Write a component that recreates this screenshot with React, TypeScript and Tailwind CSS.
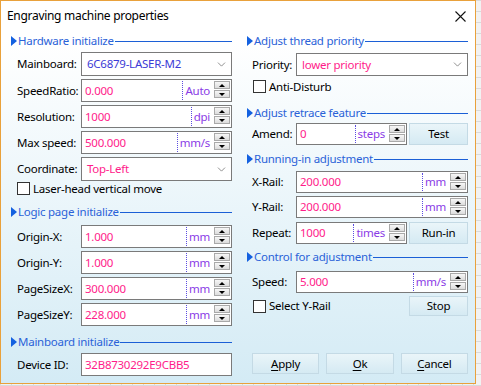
import { ChevronDown } from 'lucide-react'
import type { ReactNode } from 'react'

const PINK = 'text-[#ff1c8a]'

function Header({ title, className = '' }: { title: string; className?: string }) {
  return (
    <div className={`flex items-center h-[16px] ${className}`}>
      <svg width="6" height="10" viewBox="0 0 6 10" className="ml-px mr-[1px] shrink-0">
        <path d="M0 0 L6 5 L0 10 Z" fill="#1461e0" />
      </svg>
      <span className="text-[#2a62d8] leading-none whitespace-nowrap">{title}</span>
      <div className="flex-1 h-px bg-[#1b5fd6] ml-px" />
    </div>
  )
}

function SpinBtn({ up }: { up?: boolean }) {
  return (
    <div className="w-[16px] h-[8px] border border-[#a9a9a9] bg-linear-to-b from-[#f7f7f7] to-[#dcdcdc] flex items-center justify-center">
      <svg width="6" height="3" viewBox="0 0 6 3">
        {up ? <path d="M0 3 L3 0 L6 3 Z" fill="#000" /> : <path d="M0 0 L6 0 L3 3 Z" fill="#000" />}
      </svg>
    </div>
  )
}

function Spin() {
  return (
    <div className="flex flex-col gap-px shrink-0 self-start mt-[1px] mr-[1px]">
      <SpinBtn up />
      <SpinBtn />
    </div>
  )
}

function NumField({ value, unit, className = '' }: { value: string; unit: string; className?: string }) {
  return (
    <div className={`flex items-center border border-[#7a7a7a] bg-white ${className}`}>
      <span className={`flex-1 pl-[3px] ${PINK}`}>{value}</span>
      <div className="self-stretch my-[1px] border-l border-dotted border-[#5b4de0]" />
      <span className="pl-[2px] pr-[4px] text-[#8a3be6]">{unit}</span>
      <Spin />
    </div>
  )
}

function Select({ value, color, className = '' }: { value: string; color: string; className?: string }) {
  return (
    <div className={`flex items-center border border-[#7a7a7a] bg-white pl-[5px] pr-[3px] ${className}`}>
      <span className={`flex-1 ${color}`}>{value}</span>
      <ChevronDown size={13} strokeWidth={1.2} color="#555" />
    </div>
  )
}

function Check({ label, className = '' }: { label: string; className?: string }) {
  return (
    <div className={`flex items-center gap-[3px] ${className}`}>
      <div className="w-[13px] h-[13px] border border-[#333] bg-white" />
      <span className="whitespace-nowrap">{label}</span>
    </div>
  )
}

function Btn({ children, className = '' }: { children: ReactNode; className?: string }) {
  return (
    <div
      className={`flex items-center justify-center border border-[#c4dae5] bg-linear-to-b from-[#eaf5f9] to-[#d5eaf3] ${className}`}
    >
      {children}
    </div>
  )
}

function LeftRow({ label, children, className = '' }: { label: string; children: ReactNode; className?: string }) {
  return (
    <div className={`flex items-center pl-[7px] ${className}`}>
      <span className="w-[64px] shrink-0 whitespace-nowrap">{label}</span>
      <div className="flex-1 h-full flex">{children}</div>
    </div>
  )
}

function RightRow({ label, children, className = '' }: { label: string; children: ReactNode; className?: string }) {
  return (
    <div className={`flex items-center pl-[6px] ${className}`}>
      <span className="w-[44px] shrink-0 whitespace-nowrap">{label}</span>
      <div className="flex-1 h-full flex gap-[2px]">{children}</div>
    </div>
  )
}

export default function App() {
  return (
    <div className="w-[481px] h-[386px] bg-[#f2f2f2] bg-[linear-gradient(#dadada_1px,transparent_1px),linear-gradient(90deg,#dadada_1px,transparent_1px)] bg-[size:11px_11px] overflow-hidden">
      <div className="w-[476px] h-[384px] border border-[#e9a13b] bg-linear-to-b from-white from-10% to-[#d4ebf5] flex flex-col font-['Noto_Sans','Liberation_Sans',sans-serif] text-[11.5px] tracking-[-0.25px] text-black leading-none">
        <div className="h-[30px] flex items-center justify-between pl-[6px] pr-[9px] shrink-0">
          <span className="text-[12px] tracking-[-0.3px]">Engraving machine properties</span>
          <svg width="11" height="11" viewBox="0 0 11 11">
            <path d="M0.5 0.5 L10.5 10.5 M10.5 0.5 L0.5 10.5" stroke="#111" strokeWidth="1.1" />
          </svg>
        </div>
        <div className="flex pl-[9px] gap-[14px]">
          {/* left column */}
          <div className="w-[222px] flex flex-col">
            <Header title="Hardware initialize" className="mt-[2px]" />
            <LeftRow label="Mainboard:" className="mt-[3px] h-[24px]">
              <Select value="6C6879-LASER-M2" color="text-[#3b3bd6]" className="flex-1" />
            </LeftRow>
            <LeftRow label="SpeedRatio:" className="mt-[3px] h-[23px]">
              <NumField value="0.000" unit="Auto" className="flex-1" />
            </LeftRow>
            <LeftRow label="Resolution:" className="mt-[3px] h-[23px]">
              <NumField value="1000" unit="dpi" className="flex-1" />
            </LeftRow>
            <LeftRow label="Max speed:" className="mt-[3px] h-[23px]">
              <NumField value="500.000" unit="mm/s" className="flex-1" />
            </LeftRow>
            <LeftRow label="Coordinate:" className="mt-[3px] h-[24px]">
              <Select value="Top-Left" color={PINK} className="flex-1" />
            </LeftRow>
            <Check label="Laser-head vertical move" className="pl-[7px] h-[15px]" />
            <Header title="Logic page initialize" className="mt-[8px]" />
            <LeftRow label="Origin-X:" className="mt-[5px] h-[23px]">
              <NumField value="1.000" unit="mm" className="flex-1" />
            </LeftRow>
            <LeftRow label="Origin-Y:" className="mt-[3px] h-[23px]">
              <NumField value="1.000" unit="mm" className="flex-1" />
            </LeftRow>
            <LeftRow label="PageSizeX:" className="mt-[3px] h-[23px]">
              <NumField value="300.000" unit="mm" className="flex-1" />
            </LeftRow>
            <LeftRow label="PageSizeY:" className="mt-[3px] h-[23px]">
              <NumField value="228.000" unit="mm" className="flex-1" />
            </LeftRow>
            <Header title="Mainboard initialize" className="mt-[8px]" />
            <LeftRow label="Device ID:" className="mt-[3px] h-[23px]">
              <div className={`flex-1 flex items-center border border-[#7a7a7a] bg-white pl-[3px] ${PINK}`}>
                32B8730292E9CBB5
              </div>
            </LeftRow>
          </div>

          {/* right column */}
          <div className="w-[222px] flex flex-col">
            <Header title="Adjust thread priority" className="mt-[2px]" />
            <RightRow label="Priority:" className="mt-[4px] h-[23px]">
              <Select value="lower priority" color={PINK} className="flex-1" />
            </RightRow>
            <Check label="Anti-Disturb" className="pl-[7px] h-[15px] mt-[3px]" />
            <Header title="Adjust retrace feature" className="mt-[11px]" />
            <RightRow label="Amend:" className="mt-[2px] h-[22px]">
              <NumField value="0" unit="steps" className="w-[111px]" />
              <Btn className="flex-1">Test</Btn>
            </RightRow>
            <Header title="Running-in adjustment" className="mt-[6px]" />
            <RightRow label="X-Rail:" className="mt-[4px] h-[22px]">
              <NumField value="200.000" unit="mm" className="flex-1" />
            </RightRow>
            <RightRow label="Y-Rail:" className="mt-[3px] h-[22px]">
              <NumField value="200.000" unit="mm" className="flex-1" />
            </RightRow>
            <RightRow label="Repeat:" className="mt-[4px] h-[22px]">
              <NumField value="1000" unit="times" className="w-[111px]" />
              <Btn className="flex-1">Run-in</Btn>
            </RightRow>
            <Header title="Control for adjustment" className="mt-[5px]" />
            <RightRow label="Speed:" className="mt-[6px] h-[22px]">
              <NumField value="5.000" unit="mm/s" className="flex-1" />
            </RightRow>
            <div className="flex items-center justify-between pl-[7px] mt-[3px] h-[20px]">
              <Check label="Select Y-Rail" />
              <Btn className="w-[59px] h-full">Stop</Btn>
            </div>
            <div className="flex gap-[7px] pl-[6px] mt-[37px] h-[21px]">
              <Btn className="flex-1">
                <span className="underline underline-offset-2">A</span>pply
              </Btn>
              <Btn className="flex-1">
                <span className="underline underline-offset-2">O</span>k
              </Btn>
              <Btn className="flex-1">
                <span className="underline underline-offset-2">C</span>ancel
              </Btn>
            </div>
          </div>
        </div>
      </div>
    </div>
  )
}
